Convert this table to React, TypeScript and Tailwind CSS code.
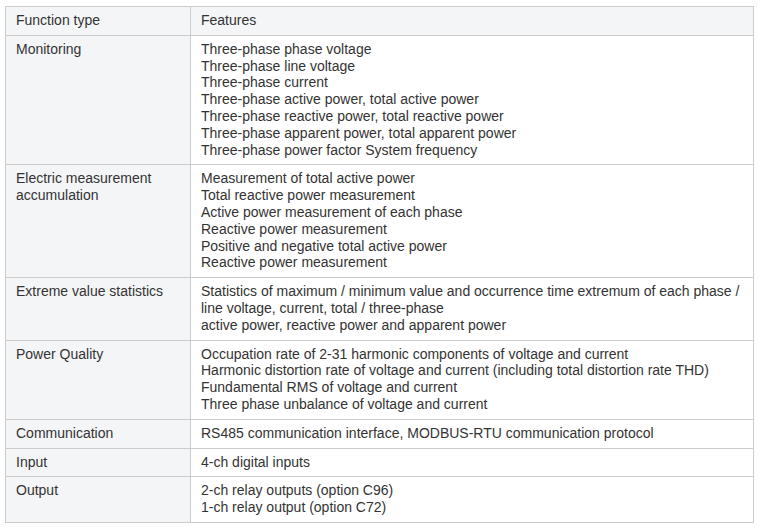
const rows: { type: string[]; features: string[] }[] = [
  {
    type: ['Monitoring'],
    features: [
      'Three-phase phase voltage',
      'Three-phase line voltage',
      'Three-phase current',
      'Three-phase active power, total active power',
      'Three-phase reactive power, total reactive power',
      'Three-phase apparent power, total apparent power',
      'Three-phase power factor System frequency',
    ],
  },
  {
    type: ['Electric measurement', 'accumulation'],
    features: [
      'Measurement of total active power',
      'Total reactive power measurement',
      'Active power measurement of each phase',
      'Reactive power measurement',
      'Positive and negative total active power',
      'Reactive power measurement',
    ],
  },
  {
    type: ['Extreme value statistics'],
    features: [
      'Statistics of maximum / minimum value and occurrence time extremum of each phase /',
      'line voltage, current, total / three-phase',
      'active power, reactive power and apparent power',
    ],
  },
  {
    type: ['Power Quality'],
    features: [
      'Occupation rate of 2-31 harmonic components of voltage and current',
      'Harmonic distortion rate of voltage and current (including total distortion rate THD)',
      'Fundamental RMS of voltage and current',
      'Three phase unbalance of voltage and current',
    ],
  },
  {
    type: ['Communication'],
    features: ['RS485 communication interface, MODBUS-RTU communication protocol'],
  },
  { type: ['Input'], features: ['4-ch digital inputs'] },
  {
    type: ['Output'],
    features: ['2-ch relay outputs (option C96)', '1-ch relay output (option C72)'],
  },
]

export default function App() {
  return (
    <div className="min-h-[527px] bg-white pl-[5px] pt-[6px] font-['Liberation_Sans',Arial,sans-serif] text-[14px] leading-[16.8px] text-[#333]">
      <table className="w-[749px] border-collapse border border-[#ccc]">
        <thead>
          <tr className="bg-[#f4f5f7]">
            <th className="w-[185px] border border-[#ccc] px-[10px] pb-[6px] pt-[5px] text-left font-normal">
              Function type
            </th>
            <th className="border border-[#ccc] px-[10px] pb-[6px] pt-[5px] text-left font-normal">
              Features
            </th>
          </tr>
        </thead>
        <tbody>
          {rows.map((row) => (
            <tr key={row.type.join(' ')}>
              <td className="border border-[#ccc] bg-[#f4f5f7] px-[10px] pb-[6px] pt-[5px] align-top">
                {row.type.map((t) => (
                  <div key={t}>{t}</div>
                ))}
              </td>
              <td className="border border-[#ccc] px-[10px] pb-[6px] pt-[5px] align-top">
                {row.features.map((f, i) => (
                  <div key={i} className="whitespace-nowrap">
                    {f}
                  </div>
                ))}
              </td>
            </tr>
          ))}
        </tbody>
      </table>
    </div>
  )
}
